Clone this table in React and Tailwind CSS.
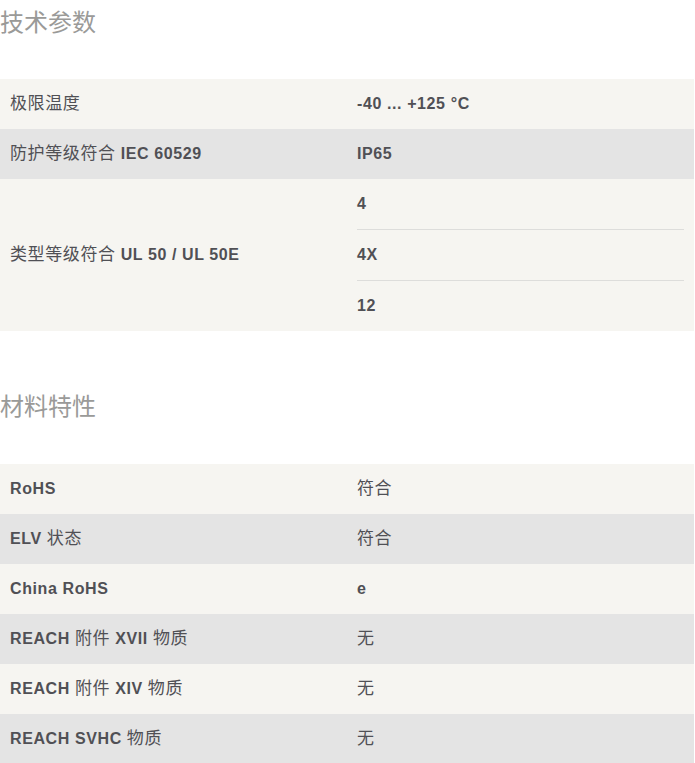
import React from "react";

const L = ({ children }) => <span className="font-bold">{children}</span>;
const C = ({ children }) => <span className="font-normal text-[17px]">{children}</span>;

function Row({ dark, label, value }) {
  return (
    <div className={`flex h-[50px] items-center ${dark ? "bg-[#e4e4e4]" : "bg-[#f6f5f1]"}`}>
      <div className="w-1/2 px-[10px]">{label}</div>
      <div className="w-1/2 px-[10px]">{value}</div>
    </div>
  );
}

export default function App() {
  return (
    <div
      className="w-[694px] bg-white text-[16px] tracking-[0.6px] text-[#505055]"
      style={{ fontFamily: '"Liberation Sans", "Noto Sans CJK SC", sans-serif' }}
    >
      <h2 className="h-[46px] text-[24px] leading-[46px] font-normal text-[#9a9a98] tracking-normal">技术参数</h2>
      <div className="mt-[33px]">
        <Row label={<C>极限温度</C>} value={<L>-40 ... +125 °C</L>} />
        <Row dark label={<><C>防护等级符合</C> <L>IEC 60529</L></>} value={<L>IP65</L>} />
        <div className="flex bg-[#f6f5f1]">
          <div className="flex w-1/2 items-center px-[10px]">
            <span><C>类型等级符合</C> <L>UL 50 / UL 50E</L></span>
          </div>
          <div className="w-1/2 px-[10px]">
            <div className="flex h-[51px] items-center border-b border-[#dddddb]"><L>4</L></div>
            <div className="flex h-[51px] items-center border-b border-[#dddddb]"><L>4X</L></div>
            <div className="flex h-[50px] items-center"><L>12</L></div>
          </div>
        </div>
      </div>
      <h2 className="mt-[53px] h-[46px] text-[24px] leading-[46px] font-normal text-[#9a9a98] tracking-normal">材料特性</h2>
      <div className="mt-[34px]">
        <Row label={<L>RoHS</L>} value={<C>符合</C>} />
        <Row dark label={<><L>ELV</L> <C>状态</C></>} value={<C>符合</C>} />
        <Row label={<L>China RoHS</L>} value={<L>e</L>} />
        <Row dark label={<><L>REACH</L> <C>附件</C> <L>XVII</L> <C>物质</C></>} value={<C>无</C>} />
        <Row label={<><L>REACH</L> <C>附件</C> <L>XIV</L> <C>物质</C></>} value={<C>无</C>} />
        <Row dark label={<><L>REACH SVHC</L> <C>物质</C></>} value={<C>无</C>} />
      </div>
    </div>
  );
}
